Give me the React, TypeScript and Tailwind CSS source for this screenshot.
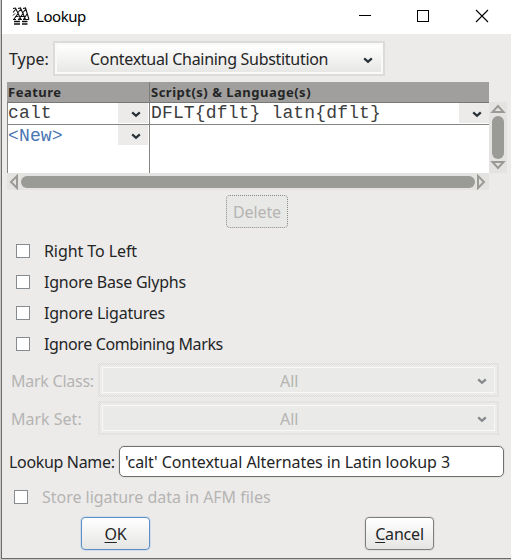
import type { ReactNode } from "react";

const dither =
  "bg-[repeating-conic-gradient(#dcdbda_0_25%,#ecebea_0_50%)] bg-[length:2px_2px]";

function Chevron({ color = "#273238" }: { color?: string }) {
  return (
    <svg width="10" height="7" viewBox="0 0 10 7" fill="none" className="block shrink-0">
      <path d="M1.200 1.300 5 4.800 8.800 1.300" stroke={color} strokeWidth="2.300" />
    </svg>
  );
}

function GlyphIcon() {
  return (
    <svg width="18" height="18" viewBox="0 0 18 18" fill="none" stroke="#111" className="block shrink-0">
      <path d="M1 1.500 3.500 1 9 12.500M6 1.500 8.500 1 13.500 12.500M11 1.500l2.500-.5L17 12.500M1 5.500 4 2M6 5.500 9 2M11 5.500 14 2M2 12 6.500 6M6.500 12.500l5-6.500M11.500 12.500 15 7" strokeWidth="1.100" />
      <path d="M1 8.500 3 6.500M1 12.500h3M6 12.500h4M11 12.500h6M3.500 9.500h3M9 9.500h3" strokeWidth="1" />
      <path d="M2 14.500h6M10 14.500h5.500M2 17h6M10 17h5.500" strokeWidth="1.300" />
    </svg>
  );
}

function Check({ label, className }: { label: string; className: string }) {
  return (
    <div className="flex h-[31px] items-center pl-4">
      <span className="size-[14px] border border-[#858b8e] bg-white" />
      <span className={`ml-[14px] whitespace-nowrap ${className}`}>{label}</span>
    </div>
  );
}

function DisabledCombo({ label, className }: { label: string; className: string }) {
  return (
    <div className="mb-1 flex h-[34px] items-center pl-[9px] text-[#b5b4b2]">
      <span className={`w-[87px] whitespace-nowrap pt-[2px] ${className}`}>{label}</span>
      <div className={`h-[34px] w-[401px] p-[2px] ${dither}`}>
        <div className="h-full bg-[#ecebea] p-[2px]">
          <div className="flex h-full items-center border border-[#f8f8f7] bg-[#eaeae8] pt-[2px]">
            <span className="flex-1 pl-[177px]">All</span>
            <span className="mr-[7px]">
              <Chevron color="#85898b" />
            </span>
          </div>
        </div>
      </div>
    </div>
  );
}

function Button({ children, focus = false }: { children: ReactNode; focus?: boolean }) {
  return (
    <button
      className={`h-[33px] w-[69px] rounded-[4px] border bg-gradient-to-b from-white to-[#e5e5e3] tracking-[-0.2px] ${
        focus ? "border-[#5d8ec4] shadow-[0_0_0_1px_#cfdded]" : "border-[#7e7e7c] shadow-[0_0_0_1px_#dededc]"
      }`}
    >
      {children}
    </button>
  );
}

function Drop() {
  return (
    <span className="flex h-5 w-[30px] items-center justify-center bg-[#ecebea] pl-[5px] pt-[2px]">
      <Chevron />
    </span>
  );
}

export default function App() {
  return (
    <div className="flex h-[560px] w-[511px] flex-col overflow-hidden bg-[#c9c9c8] pl-px font-['Noto_Sans',sans-serif] text-[16px] leading-5 text-[#242526]">
      <div className="flex h-[559px] flex-col border-b border-l border-[#6b6b6a] bg-[#ecebea]">
        <header className="flex h-[34px] shrink-0 items-center bg-white pb-[3px] pl-[10px] text-black">
          <GlyphIcon />
          <span className="ml-[6px] flex-1 pt-px text-[15px] tracking-[-0.45px]">Lookup</span>
          <svg width="150" height="14" viewBox="0 0 150 14" fill="none" stroke="#000" className="mr-2 block" shapeRendering="crispEdges">
            <path d="M6 6.500h12M64.500 1.500h11v11h-11z" />
            <path d="m123 1 12 12m0-12-12 12" shapeRendering="auto" strokeWidth="1.1" />
          </svg>
        </header>

        <div className="mt-[7px] flex h-[35px] shrink-0 items-center pl-[7px]">
          <span className="w-[44px] whitespace-nowrap">Type:</span>
          <div className="h-[35px] w-[332px] border-2 border-[#dcdbd9]">
            <div className="flex h-full items-center border-2 border-[#f9f9f8] bg-gradient-to-b from-white to-[#e7e7e5]">
              <span className="flex-1 whitespace-nowrap pl-[33px] tracking-[-0.3px]">Contextual Chaining Substitution</span>
              <span className="mr-[8px] mt-[3px]">
                <Chevron />
              </span>
            </div>
          </div>
        </div>

        <section className="ml-[5px] mt-[6px] flex h-[108px] shrink-0">
          <div className="flex w-[482px] flex-col">
            <div className="flex h-[21px] border-b border-[#777775] bg-[#a09f9d] text-[13px] font-bold">
              <span className="w-[143px] border-r border-[#7d7d7b] pl-px tracking-[0.5px]">Feature</span>
              <span className="pl-[1px] tracking-[0.5px]">Script(s) &amp; Language(s)</span>
            </div>
            <div className="flex h-[70px] border-l border-[#858583] bg-white font-['Liberation_Mono',monospace] text-[18px] tracking-[0.15px] text-[#3c3d3e]">
              <div className="flex w-[142px] flex-col border-r border-[#858583]">
                <div className="flex h-[22px] border-b border-[#858583]">
                  <span className="flex-1 leading-[21px]">calt</span>
                  <Drop />
                  <span className="w-px" />
                </div>
                <div className="flex h-[22px] text-[#4a75b2]">
                  <span className="flex-1 leading-[23px]">&lt;New&gt;</span>
                  <Drop />
                  <span className="w-px" />
                </div>
              </div>
              <div className="flex h-[22px] flex-1 border-b border-[#858583]">
                <span className="flex-1 whitespace-pre pl-[1px] leading-[21px]">{"DFLT{dflt} latn{dflt}"}</span>
                <Drop />
              </div>
            </div>
            <div className="flex h-[17px] items-center bg-[#e4e3e1] pl-[2px]">
              <svg width="10" height="16" viewBox="0 0 10 16" fill="none" stroke="#9a9b96" strokeWidth="2">
                <path d="M8 2v12L2 8z" />
              </svg>
              <span className="ml-[2px] h-3 w-[454px] rounded-full bg-[#9a9b96]" />
              <svg width="10" height="16" viewBox="0 0 10 16" fill="none" stroke="#9a9b96" strokeWidth="2" className="ml-px">
                <path d="M2 2v12l6-6z" />
              </svg>
            </div>
          </div>
          <div className="mt-5 flex h-[71px] w-[18px] flex-col items-center bg-[#e4e3e1] pt-[2px]">
            <svg width="16" height="10" viewBox="0 0 16 10" fill="none" stroke="#9a9b96" strokeWidth="2">
              <path d="M2.500 8h11L8 2z" />
            </svg>
            <span className="mt-[2px] h-[43px] w-3 rounded-full bg-[#9a9b96]" />
            <svg width="16" height="10" viewBox="0 0 16 10" fill="none" stroke="#9a9b96" strokeWidth="2" className="mt-px">
              <path d="M2.500 2h11L8 8z" />
            </svg>
          </div>
        </section>

        <button className="ml-[224px] mt-[5px] h-[33px] w-[62px] shrink-0 rounded-[4px] border border-dotted border-[#8a8a88] bg-[#e8e8e6] tracking-[-0.1px] text-[#b5b4b2]">
          Delete
        </button>

        <div className="-ml-[2px] mt-[7px] shrink-0">
          <Check label="Right To Left" className="tracking-[-0.08px]" />
          <Check label="Ignore Base Glyphs" className="tracking-[-0.22px]" />
          <Check label="Ignore Ligatures" className="tracking-[-0.2px]" />
          <Check label="Ignore Combining Marks" className="tracking-[-0.38px]" />
        </div>

        <div className="mt-[4px] shrink-0">
          <DisabledCombo label="Mark Class:" className="tracking-[-0.25px]" />
          <DisabledCombo label="Mark Set:" className="tracking-[0px]" />
        </div>

        <div className="mt-[7px] flex h-[31px] shrink-0 items-center pl-[7px]">
          <span className="w-[110px] whitespace-nowrap tracking-[-0.33px]">Lookup Name:</span>
          <div className="flex h-[31px] w-[385px] items-center whitespace-nowrap rounded-[5px] border border-[#6f6f6e] bg-white pl-[5px] tracking-[-0.08px] shadow-[0_0_0_1px_#e0e0de]">
            'calt' Contextual Alternates in Latin lookup 3
          </div>
        </div>

        <div className="-ml-[4px] mt-[4px] shrink-0 text-[#b5b4b2]">
          <Check label="Store ligature data in AFM files" className="tracking-[-0.03px]" />
        </div>

        <div className="mt-[5px] flex shrink-0 justify-between pl-[79px] pr-[77px]">
          <Button focus>
            <u className="underline-offset-2">O</u>K
          </Button>
          <Button>
            <u className="underline-offset-2">C</u>ancel
          </Button>
        </div>
      </div>
    </div>
  );
}
